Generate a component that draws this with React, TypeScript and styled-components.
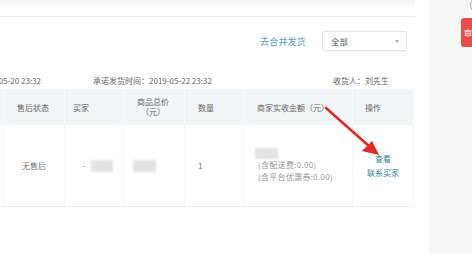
import React from "react";
import styled, { createGlobalStyle } from "styled-components";

const GlobalStyle = createGlobalStyle`
	html, body {
		margin: 0;
		padding: 0;
		background: #ffffff;
	}
	body {
		font-family: "Noto Sans CJK SC", "Liberation Sans", sans-serif;
		font-size: 8px;
		color: #666;
	}
`;

interface Column {
	key: string;
	width: number;
	header: React.ReactNode;
	pad?: number;
}

const columns: Column[] = [
	{ key: "hidden", width: 44, header: null },
	{ key: "after", width: 61, header: "售后状态" },
	{ key: "buyer", width: 59, header: "买家", pad: 8 },
	{ key: "total", width: 61, header: <TwoLine>商品总价<br />（元）</TwoLine> },
	{ key: "qty", width: 59, header: "数量" },
	{ key: "income", width: 109, header: "商家实收金额（元）" },
	{ key: "ops", width: 61, header: "操作", pad: 12 },
];

function TwoLine({ children }: { children: React.ReactNode }) {
	return <HeaderStack>{children}</HeaderStack>;
}

export default function App() {
	const gridCols = columns.map((c) => `${c.width}px`).join(" ");

	return (
		<Page>
			<GlobalStyle />
			<Main>
				<TopCard />
				<Divider />
				<Toolbar>
					<MergeLink>去合并发货</MergeLink>
					<Select>
						<span>全部</span>
						<Caret />
					</Select>
				</Toolbar>

				<InfoRow>
					<InfoLead>
						<span>下单时间：2019-05-20 23:32</span>
					</InfoLead>
					<InfoItem>承诺发货时间：2019-05-22 23:32</InfoItem>
					<InfoItem $right>收货人：刘先生</InfoItem>
				</InfoRow>

				<Table style={{ gridTemplateColumns: gridCols }}>
					{columns.map((c) => (
						<HeaderCell key={c.key} $pad={c.pad ?? 13}>
							{c.header}
						</HeaderCell>
					))}

					<BodyCell />
					<BodyCell $center>无售后</BodyCell>
					<BodyCell $pad={18}>
						-<Blur $w={22} $ml={5} />
					</BodyCell>
					<BodyCell $pad={9}>
						<Blur $w={23} />
					</BodyCell>
					<BodyCell $pad={13}>1</BodyCell>
					<BodyCell $pad={11} $column>
						<Blur $w={23} $h={11} />
						<Note>(含配送费:0.00)</Note>
						<Note>(含平台优惠券:0.00)</Note>
					</BodyCell>
					<BodyCell $center $column>
						<ActionLink>查看</ActionLink>
						<ActionLink>联系买家</ActionLink>
					</BodyCell>
				</Table>
			</Main>

			<Side>
				<Ring />
				<RedButton>审核</RedButton>
			</Side>

			<ArrowLayer width="472" height="254" viewBox="0 0 472 254">
				<line x1="326" y1="108" x2="370" y2="147" stroke="#e12a26" strokeWidth="2.6" strokeLinecap="round" />
				<polygon points="379,155 362,151 372,141" fill="#e12a26" />
			</ArrowLayer>
		</Page>
	);
}

//#region Styled Components

const Page = styled.div`
	position: relative;
	display: flex;
	width: 472px;
	height: 254px;
	overflow: hidden;
	background: #fff;
`;

const Main = styled.div`
	display: flex;
	flex-direction: column;
	width: 415px;
	flex: none;
	overflow: hidden;
`;

const TopCard = styled.div`
	height: 5px;
	background: linear-gradient(#f4f4f4, #f8f8f8);
	box-shadow: 0 2px 3px rgba(0, 0, 0, 0.03);
`;

const Divider = styled.div`
	margin-top: 11px;
	border-top: 1px solid #ececec;
`;

const Toolbar = styled.div`
	display: flex;
	align-items: center;
	justify-content: flex-end;
	gap: 16px;
	padding: 14px 8px 0 0;
`;

const MergeLink = styled.span`
	font-size: 9px;
	color: #5c9db2;
	letter-spacing: 0.2px;
`;

const Select = styled.div`
	box-sizing: border-box;
	display: flex;
	align-items: center;
	justify-content: space-between;
	width: 85px;
	height: 20px;
	padding: 0 7px 0 8px;
	border: 1px solid #e3e3e3;
	border-radius: 2px;
	color: #555;
	font-size: 8.5px;
	box-shadow: 0 1px 1px rgba(0, 0, 0, 0.03);
`;

const Caret = styled.span`
	width: 0;
	height: 0;
	border-left: 2.5px solid transparent;
	border-right: 2.5px solid transparent;
	border-top: 3px solid #aaa;
`;

const InfoRow = styled.div`
	display: grid;
	grid-template-columns: 41px 52px 240px auto;
	margin-top: 24px;
	height: 12px;
	line-height: 12px;
	color: #666;
	white-space: nowrap;
`;

const InfoLead = styled.div`
	display: flex;
	justify-content: flex-end;
	overflow: visible;
	grid-column: 1;
`;

const InfoItem = styled.div<{ $right?: boolean }>`
	grid-column: ${(p) => (p.$right ? 4 : 3)};
`;

const Table = styled.div`
	display: grid;
	grid-template-rows: 36px 82px;
	margin-top: 2px;
	margin-left: -40px;
`;

const HeaderCell = styled.div<{ $pad: number }>`
	box-sizing: border-box;
	display: flex;
	align-items: center;
	padding-left: ${(p) => p.$pad}px;
	background: #f2f5f8;
	border-right: 1px solid #fbfcfd;
	color: #666;
	white-space: nowrap;

	&:last-child {
		border-right-color: #eef1f4;
	}
`;

const HeaderStack = styled.div`
	text-align: center;
	line-height: 10.5px;
`;

const BodyCell = styled.div<{ $pad?: number; $center?: boolean; $column?: boolean }>`
	box-sizing: border-box;
	display: flex;
	flex-direction: ${(p) => (p.$column ? "column" : "row")};
	align-items: ${(p) => (p.$column ? (p.$center ? "center" : "flex-start") : "center")};
	justify-content: ${(p) => (p.$center || p.$column ? "center" : "flex-start")};
	padding-left: ${(p) => (p.$center ? 0 : p.$pad ?? 0)}px;
	border-right: 1px solid #f0f2f4;
	border-bottom: 1px solid #e9ecef;
	color: #777;
	white-space: nowrap;
`;

const Blur = styled.span<{ $w: number; $h?: number; $ml?: number }>`
	display: inline-block;
	width: ${(p) => p.$w}px;
	height: ${(p) => p.$h ?? 12}px;
	margin-left: ${(p) => p.$ml ?? 0}px;
	background: #e3e3e3;
	filter: blur(0.8px);
`;

const Note = styled.div`
	padding-left: 3px;
	line-height: 12px;
	color: #999;
	letter-spacing: 0.3px;
`;

const ActionLink = styled.div`
	line-height: 14px;
	color: #3a7f9c;
`;

const Side = styled.div`
	display: flex;
	flex-direction: column;
	margin-left: 14px;
	padding-left: 32px;
	flex: 1;
	background: #f6f6f6;
`;

const Ring = styled.div`
	box-sizing: border-box;
	width: 16px;
	height: 16px;
	margin: -3px 0 0 9px;
	border: 1px solid #b8b8b8;
	border-radius: 50%;
	flex: none;
`;

const RedButton = styled.div`
	display: flex;
	align-items: center;
	width: 40px;
	height: 29px;
	margin-top: 5px;
	padding-left: 3px;
	border-radius: 3px;
	background: #ea4c4c;
	color: #fff;
	font-size: 8px;
	flex: none;
`;

const ArrowLayer = styled.svg`
	position: absolute;
	left: 0;
	top: 0;
	pointer-events: none;
`;
//#endregion
